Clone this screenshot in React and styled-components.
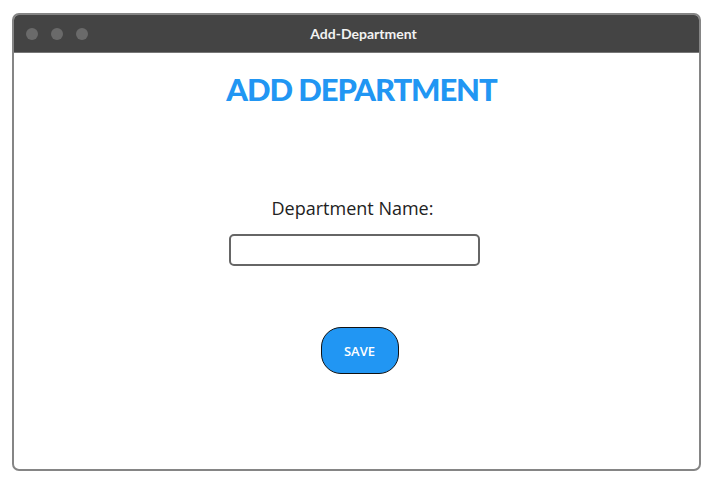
import React from 'react';
import styled, { createGlobalStyle } from 'styled-components';

const GlobalStyle = createGlobalStyle`
  html, body {
    margin: 0;
    padding: 0;
    background: #ffffff;
    font-family: "Open Sans", Lato, sans-serif;
  }
`;

const Page = styled.div`
  padding: 13px 0 0 12px;
`;

const Window = styled.div`
  width: 689px;
  height: 458px;
  box-sizing: border-box;
  border: 2px solid #858585;
  border-radius: 7px;
  overflow: hidden;
  display: flex;
  flex-direction: column;
  background: #fff;
`;

const TitleBar = styled.div`
  height: 37px;
  background: #444444;
  display: flex;
  align-items: center;
  position: relative;
  padding-left: 12px;
  gap: 13px;
  border-bottom: 1px solid #777;
`;

const Dot = styled.span`
  width: 12px;
  height: 12px;
  border-radius: 50%;
  background: #6a6a6a;
`;

const WindowTitle = styled.div`
  position: absolute;
  left: 14px;
  right: 0;
  text-align: center;
  color: #f2f2f2;
  font-family: Lato, sans-serif;
  font-size: 14px;
  font-weight: 700;
`;

const Body = styled.div`
  flex: 1;
  display: flex;
  flex-direction: column;
  align-items: center;
`;

const Heading = styled.h1`
  margin: 17px 0 0 10px;
  color: #2196f3;
  font-family: Lato, sans-serif;
  font-size: 31px;
  font-weight: 900;
  letter-spacing: -1.1px;
`;

const Label = styled.label`
  margin-top: 88px;
  margin-left: -8px;
  font-size: 18px;
  color: #222;
`;

const Input = styled.input`
  margin-top: 14px;
  margin-right: 4px;
  width: 251px;
  height: 32px;
  box-sizing: border-box;
  border: 2px solid #666;
  border-radius: 5px;
  outline: none;
`;

const SaveButton = styled.button`
  margin-top: 61px;
  margin-left: 6px;
  width: 78px;
  height: 47px;
  border: 1px solid #111;
  border-radius: 20px;
  background: #2196f3;
  color: #fff;
  font-family: "Open Sans", sans-serif;
  font-size: 13px;
  font-weight: 600;
`;

export default function App() {
  return (
    <>
      <GlobalStyle />
      <Page>
        <Window>
          <TitleBar>
            <Dot />
            <Dot />
            <Dot />
            <WindowTitle>Add-Department</WindowTitle>
          </TitleBar>
          <Body>
            <Heading>ADD DEPARTMENT</Heading>
            <Label htmlFor="dept">Department Name:</Label>
            <Input id="dept" type="text" />
            <SaveButton>SAVE</SaveButton>
          </Body>
        </Window>
      </Page>
    </>
  );
}
